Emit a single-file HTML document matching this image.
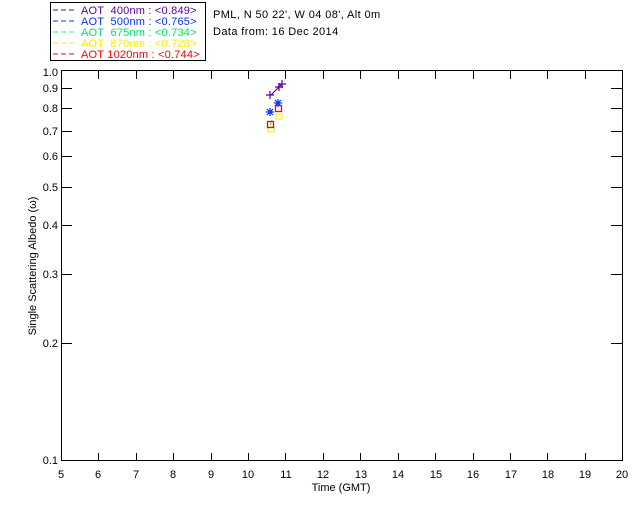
<!DOCTYPE html>
<html><head><meta charset="utf-8"><style>
html,body{margin:0;padding:0;background:#fff;width:640px;height:512px;overflow:hidden}
svg text{font-family:"Liberation Sans",sans-serif;font-size:11px}
.lg text{white-space:pre;letter-spacing:0.2px}
</style></head><body>
<svg width="640" height="512" xmlns="http://www.w3.org/2000/svg">
<rect x="50.5" y="2.5" width="155" height="58" fill="#fff" stroke="#000" stroke-width="1"/>
<g class="lg" font-size="11">
<line x1="53" y1="10" x2="76" y2="10" stroke="#5a00a0" stroke-dasharray="5,3"/>
<text x="81" y="14" fill="#5a00a0" xml:space="preserve">AOT  400nm : &lt;0.849&gt;</text>
<line x1="53" y1="21" x2="76" y2="21" stroke="#0030ff" stroke-dasharray="5,3"/>
<text x="81" y="25" fill="#0030ff" xml:space="preserve">AOT  500nm : &lt;0.765&gt;</text>
<line x1="53" y1="32" x2="76" y2="32" stroke="#00ff80" stroke-dasharray="5,3"/>
<text x="81" y="36" fill="#00e070" xml:space="preserve">AOT  675nm : &lt;0.734&gt;</text>
<line x1="53" y1="43" x2="76" y2="43" stroke="#f0f000" stroke-dasharray="5,3"/>
<text x="81" y="47" fill="#f0f000" xml:space="preserve">AOT  870nm : &lt;0.728&gt;</text>
<line x1="53" y1="54" x2="76" y2="54" stroke="#f00" stroke-dasharray="5,3"/>
<text x="81" y="58" fill="#f00" xml:space="preserve">AOT 1020nm : &lt;0.744&gt;</text>
</g>
<text x="213" y="18" style="letter-spacing:0.4px">PML, N 50 22', W 04 08', Alt 0m</text>
<text x="213" y="35" style="letter-spacing:0.4px">Data from: 16 Dec 2014</text>
<rect x="61.5" y="70.5" width="561" height="390" fill="none" stroke="#000"/>
<g stroke="#000">
<path d="M98.5 461v-8M136.5 461v-8M173.5 461v-8M211.5 461v-8M248.5 461v-8M285.5 461v-8M323.5 461v-8M360.5 461v-8M398.5 461v-8M435.5 461v-8M473.5 461v-8M510.5 461v-8M547.5 461v-8M585.5 461v-8"/>
<path d="M98.5 71v8M136.5 71v8M173.5 71v8M211.5 71v8M248.5 71v8M285.5 71v8M323.5 71v8M360.5 71v8M398.5 71v8M435.5 71v8M473.5 71v8M510.5 71v8M547.5 71v8M585.5 71v8"/>
<path d="M61 88.5h11M61 108.5h11M61 131.5h11M61 156.5h11M61 187.5h11M61 225.5h11M61 274.5h11M61 343.5h11"/>
<path d="M622 88.5h-11M622 108.5h-11M622 131.5h-11M622 156.5h-11M622 187.5h-11M622 225.5h-11M622 274.5h-11M622 343.5h-11"/>
</g>
<g font-size="10" text-anchor="end">
<text x="58" y="76">1.0</text><text x="58" y="92">0.9</text><text x="58" y="112">0.8</text><text x="58" y="135">0.7</text><text x="58" y="160">0.6</text><text x="58" y="191">0.5</text><text x="58" y="229">0.4</text><text x="58" y="278">0.3</text><text x="58" y="347">0.2</text><text x="58" y="464">0.1</text>
</g>
<g font-size="11" text-anchor="middle">
<text x="61" y="478">5</text><text x="98" y="478">6</text><text x="136" y="478">7</text><text x="173" y="478">8</text><text x="211" y="478">9</text><text x="248" y="478">10</text><text x="286" y="478">11</text><text x="323" y="478">12</text><text x="361" y="478">13</text><text x="398" y="478">14</text><text x="436" y="478">15</text><text x="473" y="478">16</text><text x="511" y="478">17</text><text x="548" y="478">18</text><text x="585" y="478">19</text><text x="622" y="478">20</text>
<text x="341" y="491" font-size="10">Time (GMT)</text>
<text transform="translate(36,266) rotate(-90)" font-size="10">Single Scattering Albedo (ω)</text>
</g>
<g stroke="#5a00a0" stroke-width="1.2">
<path d="M266 95h8M270 91v8M275 87h8M279 83v8M278 84h8M282 80v8M271 95L282 84"/>
</g>
<g stroke="#00ff80"><path d="M272 120l-2 5"/></g>
<g stroke="#f0f000" fill="none"><rect x="268" y="127" width="6" height="5"/><rect x="276" y="114" width="6" height="5"/></g>
<g stroke="#0030ff" stroke-width="1.2">
<path d="M266 112h8M270 108v8M267 109l6 6M273 109l-6 6M274 103h8M278 99v8M275 100l6 6M281 100l-6 6"/>
</g>
<g stroke="#f00" fill="none" stroke-width="1.3">
<rect x="267.5" y="121.5" width="6" height="6"/><rect x="275.5" y="105.5" width="6" height="6"/>
</g>
</svg>
</body></html>
